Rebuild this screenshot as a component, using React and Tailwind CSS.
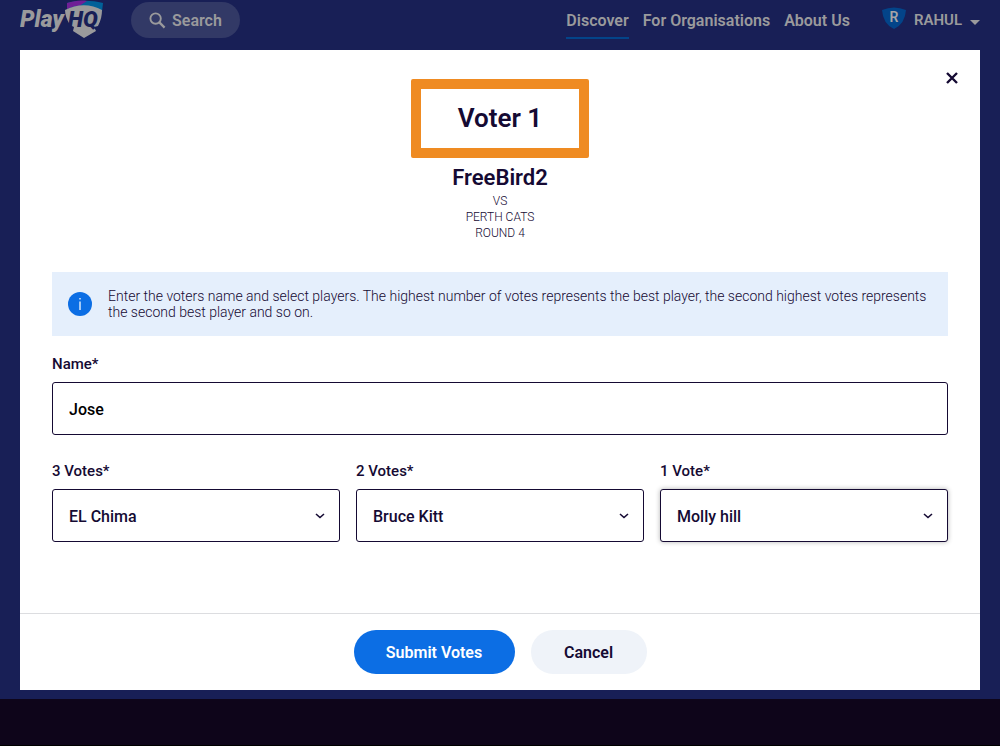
import React from "react";

function Logo() {
  return (
    <a href="#" aria-label="PlayHQ home" className="block shrink-0">
      <svg width="83" height="40" viewBox="0 0 83 40">
        <path d="M47 3 C59 0 71 0 83 3 L82 12 C71 5 59 5 47 9 Z" fill="#016199" />
        <path d="M47 3 C54 1 60 0 67 1 L60 5.500 C55 6 51 7 47 9 Z" fill="#6f1e96" />
        <path
          d="M45 10 C57 3.500 71 3.500 82 10 C82 15 81 20 78 26 L74 27 L76 31 L64 38 L53 31 L54 27 L50 25 C47 20 45 15 45 10 Z"
          fill="#9a9a9c"
        />
        <text x="0" y="27" fill="#9a9a9c" fontSize="23" fontWeight="900" fontStyle="italic" fontFamily="Roboto, sans-serif">
          Play
        </text>
        <text x="48" y="27" fill="#181f56" fontSize="22" fontWeight="900" fontStyle="italic" fontFamily="Roboto, sans-serif">
          HQ
        </text>
      </svg>
    </a>
  );
}

function SearchIcon() {
  return (
    <svg width="17" height="17" viewBox="0 0 18 18" fill="none" stroke="#9a9a9c" strokeWidth="2">
      <circle cx="7" cy="7" r="5.500" />
      <path d="M11 11 L16.500 16.500" strokeWidth="2.400" />
    </svg>
  );
}

function Header() {
  return (
    <header className="flex h-[50px] items-start justify-between px-5 text-base font-semibold text-[#9a9a9c]">
      <div className="flex items-center gap-7">
        <Logo />
        <button type="button" className="flex h-9 items-center gap-1.5 rounded-full bg-[#323966] px-[18px]">
          <SearchIcon />
          <span className="pt-0.5">Search</span>
        </button>
      </div>
      <div className="flex items-start">
        <nav className="flex gap-3.5 pt-[9px]">
          <a href="#" className="border-b-2 border-[#034489] pb-1 leading-6">Discover</a>
          <a href="#" className="leading-6">For Organisations</a>
          <a href="#" className="leading-6">About Us</a>
        </nav>
        <button type="button" className="ml-8 flex h-10 items-center gap-2">
          <svg width="24" height="22" viewBox="0 0 24 22" className="mb-1">
            <path d="M0 3 Q12 -2 24 3 Q23 17 12 22 Q1 17 0 3 Z" fill="#034489" />
            <text x="12" y="15" textAnchor="middle" fill="#a5a5a7" fontSize="14" fontWeight="600" fontFamily="Roboto, sans-serif">R</text>
          </svg>
          <span className="text-[15px]">RAHUL</span>
          <svg width="10" height="5" viewBox="0 0 10 5" className="mt-1">
            <path d="M0 0 H10 L5 5 Z" fill="#9a9a9c" />
          </svg>
        </button>
      </div>
    </header>
  );
}

function VoteSelect({ id, label, value, active }) {
  return (
    <div className="flex flex-col gap-2">
      <label htmlFor={id} className="text-[15px] leading-5 font-medium">{label}</label>
      <div className="relative">
        <select
          id={id}
          defaultValue={value}
          className={
            "h-[53px] w-full appearance-none rounded-[3px] border border-[#150a33] bg-white px-4 pt-0.5 text-base font-medium " +
            (active ? "shadow-[0_0_5px_rgba(0,0,0,0.3)]" : "")
          }
        >
          <option>{value}</option>
        </select>
        <svg width="10" height="6" viewBox="0 0 10 6" className="pointer-events-none absolute top-6 right-[15px]">
          <path d="M1 1 L5 4.500 L9 1" fill="none" stroke="#150a33" strokeWidth="1.600" />
        </svg>
      </div>
    </div>
  );
}

export default function App() {
  return (
    <div className="flex min-h-screen flex-col bg-[#181f56] font-[Roboto,sans-serif] text-[#150a33]">
      <Header />
      <main className="grow px-5 pb-[9px]">
        <form role="dialog" aria-labelledby="title" className="relative bg-white" onSubmit={(e) => e.preventDefault()}>
          <button type="button" aria-label="Close" className="absolute top-[22px] right-[22px]">
            <svg width="12" height="12" viewBox="0 0 12 12">
              <path d="M1 1 L11 11 M11 1 L1 11" stroke="#150a33" strokeWidth="2.400" />
            </svg>
          </button>
          <div className="flex flex-col items-center px-8 pt-[29px]">
            <h1 id="title" className="flex h-[79px] w-[178px] items-center justify-center rounded-[2px] border-10 border-[#ef8b22] text-[26px] font-semibold">
              Voter 1
            </h1>
            <h2 className="mt-[5px] text-[22px] leading-[30px] font-semibold">FreeBird2</h2>
            <div className="text-center text-xs leading-4 font-light">
              <p>VS</p>
              <p>PERTH CATS</p>
              <p>ROUND 4</p>
            </div>
          </div>
          <div className="px-8 pt-[31px] pb-[71px]">
            <div className="flex min-h-16 items-center gap-4 bg-[#e5effc] px-4">
              <svg width="24" height="24" viewBox="0 0 24 24" className="shrink-0">
                <circle cx="12" cy="12" r="12" fill="#0c6ee4" />
                <path d="M12 9.500 V18 M12 6 V7.500" stroke="#e5effc" strokeWidth="1.400" />
              </svg>
              <p className="text-sm leading-4 font-light">
                Enter the voters name and select players. The highest number of votes represents the best player, the second highest votes represents the second best player and so on.
              </p>
            </div>
            <div className="mt-[18px] flex flex-col gap-2">
              <label htmlFor="name" className="text-[15px] leading-5 font-medium">Name*</label>
              <input id="name" defaultValue="Jose" className="h-[53px] w-full rounded-[3px] border border-[#150a33] px-4 pt-0.5 text-base font-medium text-black" />
            </div>
            <div className="mt-[26px] grid grid-cols-3 gap-4">
              <VoteSelect id="v3" label="3 Votes*" value="EL Chima" />
              <VoteSelect id="v2" label="2 Votes*" value="Bruce Kitt" />
              <VoteSelect id="v1" label="1 Vote*" value="Molly hill" active />
            </div>
          </div>
          <div className="flex justify-center gap-4 border-t border-[#dcdde0] py-4 text-base font-semibold">
            <button type="submit" className="h-11 w-[161px] rounded-full bg-[#0c6ee4] pt-0.5 text-white">Submit Votes</button>
            <button type="button" className="h-11 w-[116px] rounded-full bg-[#eff3f9] pt-0.5">Cancel</button>
          </div>
        </form>
      </main>
      <footer className="h-[47px] border-b border-black bg-[#0e051a]" />
    </div>
  );
}
